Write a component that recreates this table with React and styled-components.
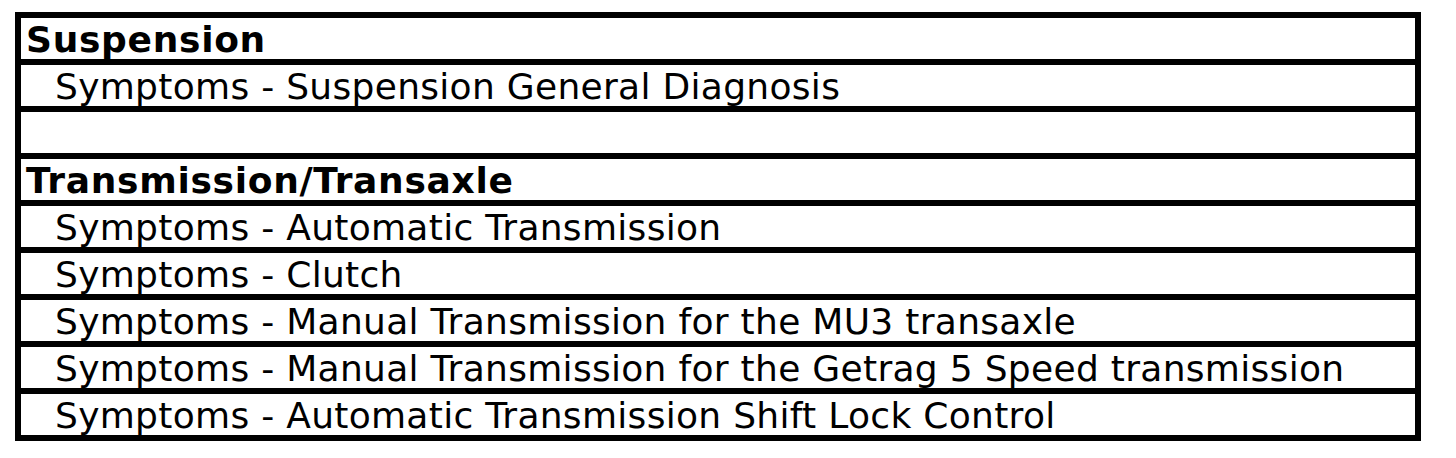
import React from "react";
import styled, { createGlobalStyle } from "styled-components";

const rows = [
  { text: "Suspension", heading: true },
  { text: "Symptoms - Suspension General Diagnosis" },
  { text: "" },
  { text: "Transmission/Transaxle", heading: true },
  { text: "Symptoms - Automatic Transmission" },
  { text: "Symptoms - Clutch" },
  { text: "Symptoms - Manual Transmission for the MU3 transaxle" },
  { text: "Symptoms - Manual Transmission for the Getrag 5 Speed transmission" },
  { text: "Symptoms - Automatic Transmission Shift Lock Control" },
];

const App = () => {
  return (
    <Page>
      <GlobalStyle />
      <Table>
        {rows.map((row, i) => (
          <Row key={i} heading={row.heading ? 1 : 0}>
            {row.text}
          </Row>
        ))}
      </Table>
    </Page>
  );
};

const GlobalStyle = createGlobalStyle`
  body {
    margin: 0;
    background: #fff;
    font-family: "DejaVu Sans", Verdana, sans-serif;
  }
`;

const Page = styled.div`
  padding: 12px 0 0 15px;
`;

const Table = styled.div`
  width: 1394px;
  display: grid;
  row-gap: 6px;
  border: 6px solid #000;
  background: #000;
`;

const Row = styled.div`
  box-sizing: border-box;
  height: 41px;
  padding-top: 1px;
  background: #fff;
  color: #000;
  font-size: 36px;
  line-height: 42px;
  white-space: pre;
  font-weight: ${(p) => (p.heading ? "bold" : "normal")};
  letter-spacing: ${(p) => (p.heading ? "0.7px" : "0.3px")};
  padding-left: ${(p) => (p.heading ? "5px" : "34px")};
`;

export default App;
